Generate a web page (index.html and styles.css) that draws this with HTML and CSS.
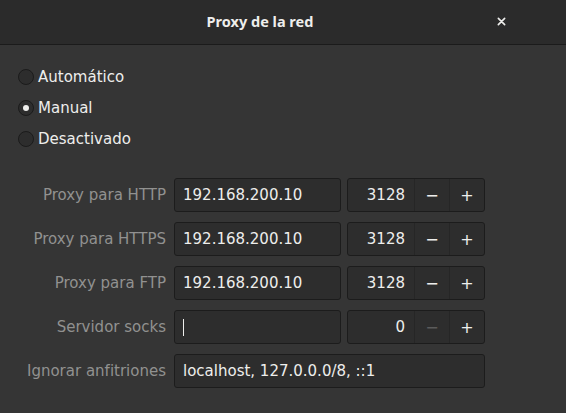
FILE: index.html
```html
<!DOCTYPE html>
<html lang="es">
<head>
<meta charset="utf-8">
<link rel="stylesheet" href="styles.css">
</head>
<body>
<div class="window">
  <header class="titlebar">
    <span class="title">Proxy de la red</span>
    <button class="close" aria-label="Cerrar">
      <svg width="10" height="10" viewBox="0 0 10 10"><path d="M1.5 1.5 L8.5 8.5 M8.5 1.5 L1.5 8.5" stroke="#eeeeec" stroke-width="1.8" stroke-linecap="round"/></svg>
    </button>
  </header>
  <main class="content">
    <div class="radios">
      <label class="radio"><span class="dot"></span>Automático</label>
      <label class="radio"><span class="dot checked"></span>Manual</label>
      <label class="radio"><span class="dot"></span>Desactivado</label>
    </div>
    <div class="form">
      <span class="lbl">Proxy para HTTP</span>
      <div class="entry">192.168.200.10</div>
      <div class="spin"><span class="num">3128</span><span class="btn">−</span><span class="btn">+</span></div>

      <span class="lbl">Proxy para HTTPS</span>
      <div class="entry">192.168.200.10</div>
      <div class="spin"><span class="num">3128</span><span class="btn">−</span><span class="btn">+</span></div>

      <span class="lbl">Proxy para FTP</span>
      <div class="entry">192.168.200.10</div>
      <div class="spin"><span class="num">3128</span><span class="btn">−</span><span class="btn">+</span></div>

      <span class="lbl">Servidor socks</span>
      <div class="entry"><span class="caret"></span></div>
      <div class="spin"><span class="num">0</span><span class="btn disabled">−</span><span class="btn">+</span></div>

      <span class="lbl">Ignorar anfitriones</span>
      <div class="entry wide">localhost, 127.0.0.0/8, ::1</div>
    </div>
  </main>
</div>
</body>
</html>
```
FILE: styles.css
```css
* { box-sizing: border-box; }
html, body { margin: 0; padding: 0; }
body {
  background: #353535;
  font-family: "DejaVu Sans", "Noto Sans", sans-serif;
  font-size: 15px;
  color: #eeeeec;
  width: 566px;
  height: 413px;
  overflow: hidden;
}
.titlebar {
  height: 45px;
  background: #2b2b2b;
  border-bottom: 1px solid #1b1b1b;
  display: flex;
  align-items: center;
  justify-content: center;
  position: relative;
}
.title {
  font-family: "Noto Sans", sans-serif;
  font-weight: bold;
  font-size: 14.5px;
  color: #eeeeec;
  margin-top: -2px;
  margin-right: 46px;
}
.close {
  position: absolute;
  right: 60px;
  top: 17px;
  width: 9px;
  height: 9px;
  padding: 0;
  border: 0;
  background: none;
  display: block;
}
.close svg { display: block; width: 9px; height: 9px; }
.content { padding: 16px 0 0 18px; }
.radios { display: flex; flex-direction: column; }
.radio {
  height: 31px;
  display: flex;
  align-items: center;
  gap: 4px;
  color: #eeeeec;
}
.dot {
  width: 16px;
  height: 16px;
  border-radius: 50%;
  border: 1px solid #1b1b1b;
  background: #2d2d2d;
  display: flex;
  align-items: center;
  justify-content: center;
}
.dot.checked::after {
  content: "";
  width: 6px;
  height: 6px;
  border-radius: 50%;
  background: #eeeeec;
}
.form {
  margin-top: 24px;
  display: grid;
  grid-template-columns: 149px 168px 138px;
  column-gap: 6px;
  row-gap: 10px;
}
.lbl {
  color: #919190;
  text-align: right;
  align-self: center;
  white-space: nowrap;
  margin-right: 1px;
}
.entry {
  height: 34px;
  background: #2d2d2d;
  border: 1px solid #1c1c1c;
  border-radius: 3px;
  display: flex;
  align-items: center;
  padding-left: 8px;
  color: #eeeeec;
  margin-left: 1px;
}
.entry.wide { grid-column: 2 / 4; }
.caret {
  width: 1px;
  height: 17px;
  background: #eeeeec;
}
.spin {
  height: 34px;
  background: #2d2d2d;
  border: 1px solid #1c1c1c;
  border-radius: 3px;
  display: flex;
  align-items: stretch;
}
.num {
  flex: 1;
  padding-right: 9px;
  display: flex;
  align-items: center;
  justify-content: flex-end;
}
.btn {
  width: 35px;
  border-left: 1px solid #262626;
  display: flex;
  align-items: center;
  justify-content: center;
  font-size: 16px;
  color: #eeeeec;
}
.btn.disabled { color: #5b5b5b; }
```
